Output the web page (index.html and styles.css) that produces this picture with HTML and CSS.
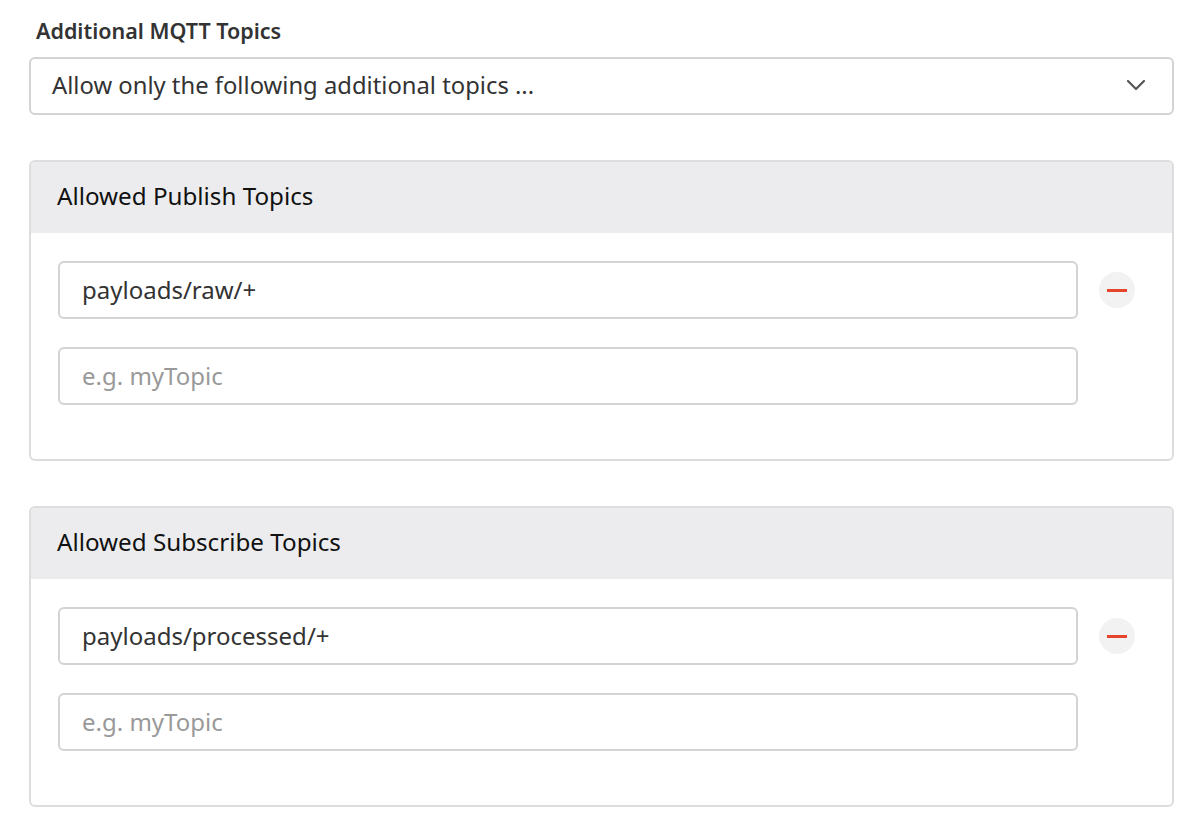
FILE: index.html
```html
<!DOCTYPE html>
<html lang="en">
<head>
    <meta charset="UTF-8">
    <title>Additional MQTT Topics</title>
    <link rel="stylesheet" href="styles.css">
</head>
<body>
    <div class="form">
        <label class="field-label">Additional MQTT Topics</label>
        <div class="select">
            <span>Allow only the following additional topics ...</span>
            <svg class="chevron" width="20" height="12" viewBox="0 0 20 12">
                <path d="M2 2 L10 10 L18 2" fill="none" stroke="#555" stroke-width="2.2" stroke-linecap="round" stroke-linejoin="round"/>
            </svg>
        </div>

        <div class="panel">
            <div class="panel-header">Allowed Publish Topics</div>
            <div class="panel-body">
                <div class="topic-row">
                    <input class="topic-input" type="text" value="payloads/raw/+">
                    <button class="btn-remove" title="Remove"><span></span></button>
                </div>
                <div class="topic-row">
                    <input class="topic-input" type="text" placeholder="e.g. myTopic">
                </div>
            </div>
        </div>

        <div class="panel">
            <div class="panel-header">Allowed Subscribe Topics</div>
            <div class="panel-body">
                <div class="topic-row">
                    <input class="topic-input" type="text" value="payloads/processed/+">
                    <button class="btn-remove" title="Remove"><span></span></button>
                </div>
                <div class="topic-row">
                    <input class="topic-input" type="text" placeholder="e.g. myTopic">
                </div>
            </div>
        </div>
    </div>
</body>
</html>
```

FILE: styles.css
```css
body {
    margin: 0;
    background: #ffffff;
    font-family: "Noto Sans", "Open Sans", sans-serif;
    color: #333;
}

.form {
    width: 1145px;
    padding: 18px 0 0 29px;
}

.field-label {
    display: block;
    font-size: 21.5px;
    line-height: 26px;
    font-weight: 600;
    color: #333;
    padding-left: 7px;
    margin-bottom: 13px;
}

.select {
    height: 58px;
    box-sizing: border-box;
    border: 2px solid #d3d3d3;
    border-radius: 6px;
    display: flex;
    align-items: center;
    justify-content: space-between;
    padding: 0 26px 2px 21px;
    font-size: 23.8px;
    color: #333;
}

.chevron {
    display: block;
}

.panel {
    margin-top: 45px;
    border: 2px solid #dddddd;
    border-radius: 6px;
    overflow: hidden;
}

.panel-header {
    background: #ececee;
    height: 71px;
    box-sizing: border-box;
    display: flex;
    align-items: center;
    padding: 0 0 4px 26px;
    font-size: 24.2px;
    color: #111;
}

.panel-body {
    padding: 28px 0 26px 27px;
}

.topic-row {
    display: flex;
    align-items: center;
    margin-bottom: 28px;
}

.topic-input {
    width: 1020px;
    height: 58px;
    box-sizing: border-box;
    border: 2px solid #d3d3d3;
    border-radius: 6px;
    padding: 0 22px 2px;
    font-family: inherit;
    font-size: 24px;
    color: #333;
    outline: none;
}

.topic-input::placeholder {
    color: #999;
}

.btn-remove {
    width: 36px;
    height: 36px;
    margin-left: 21px;
    border: none;
    border-radius: 50%;
    background: #f2f2f2;
    display: flex;
    align-items: center;
    justify-content: center;
    padding: 0;
    cursor: pointer;
}

.btn-remove span {
    display: block;
    width: 20px;
    height: 3px;
    background: #e5452c;
}
```
